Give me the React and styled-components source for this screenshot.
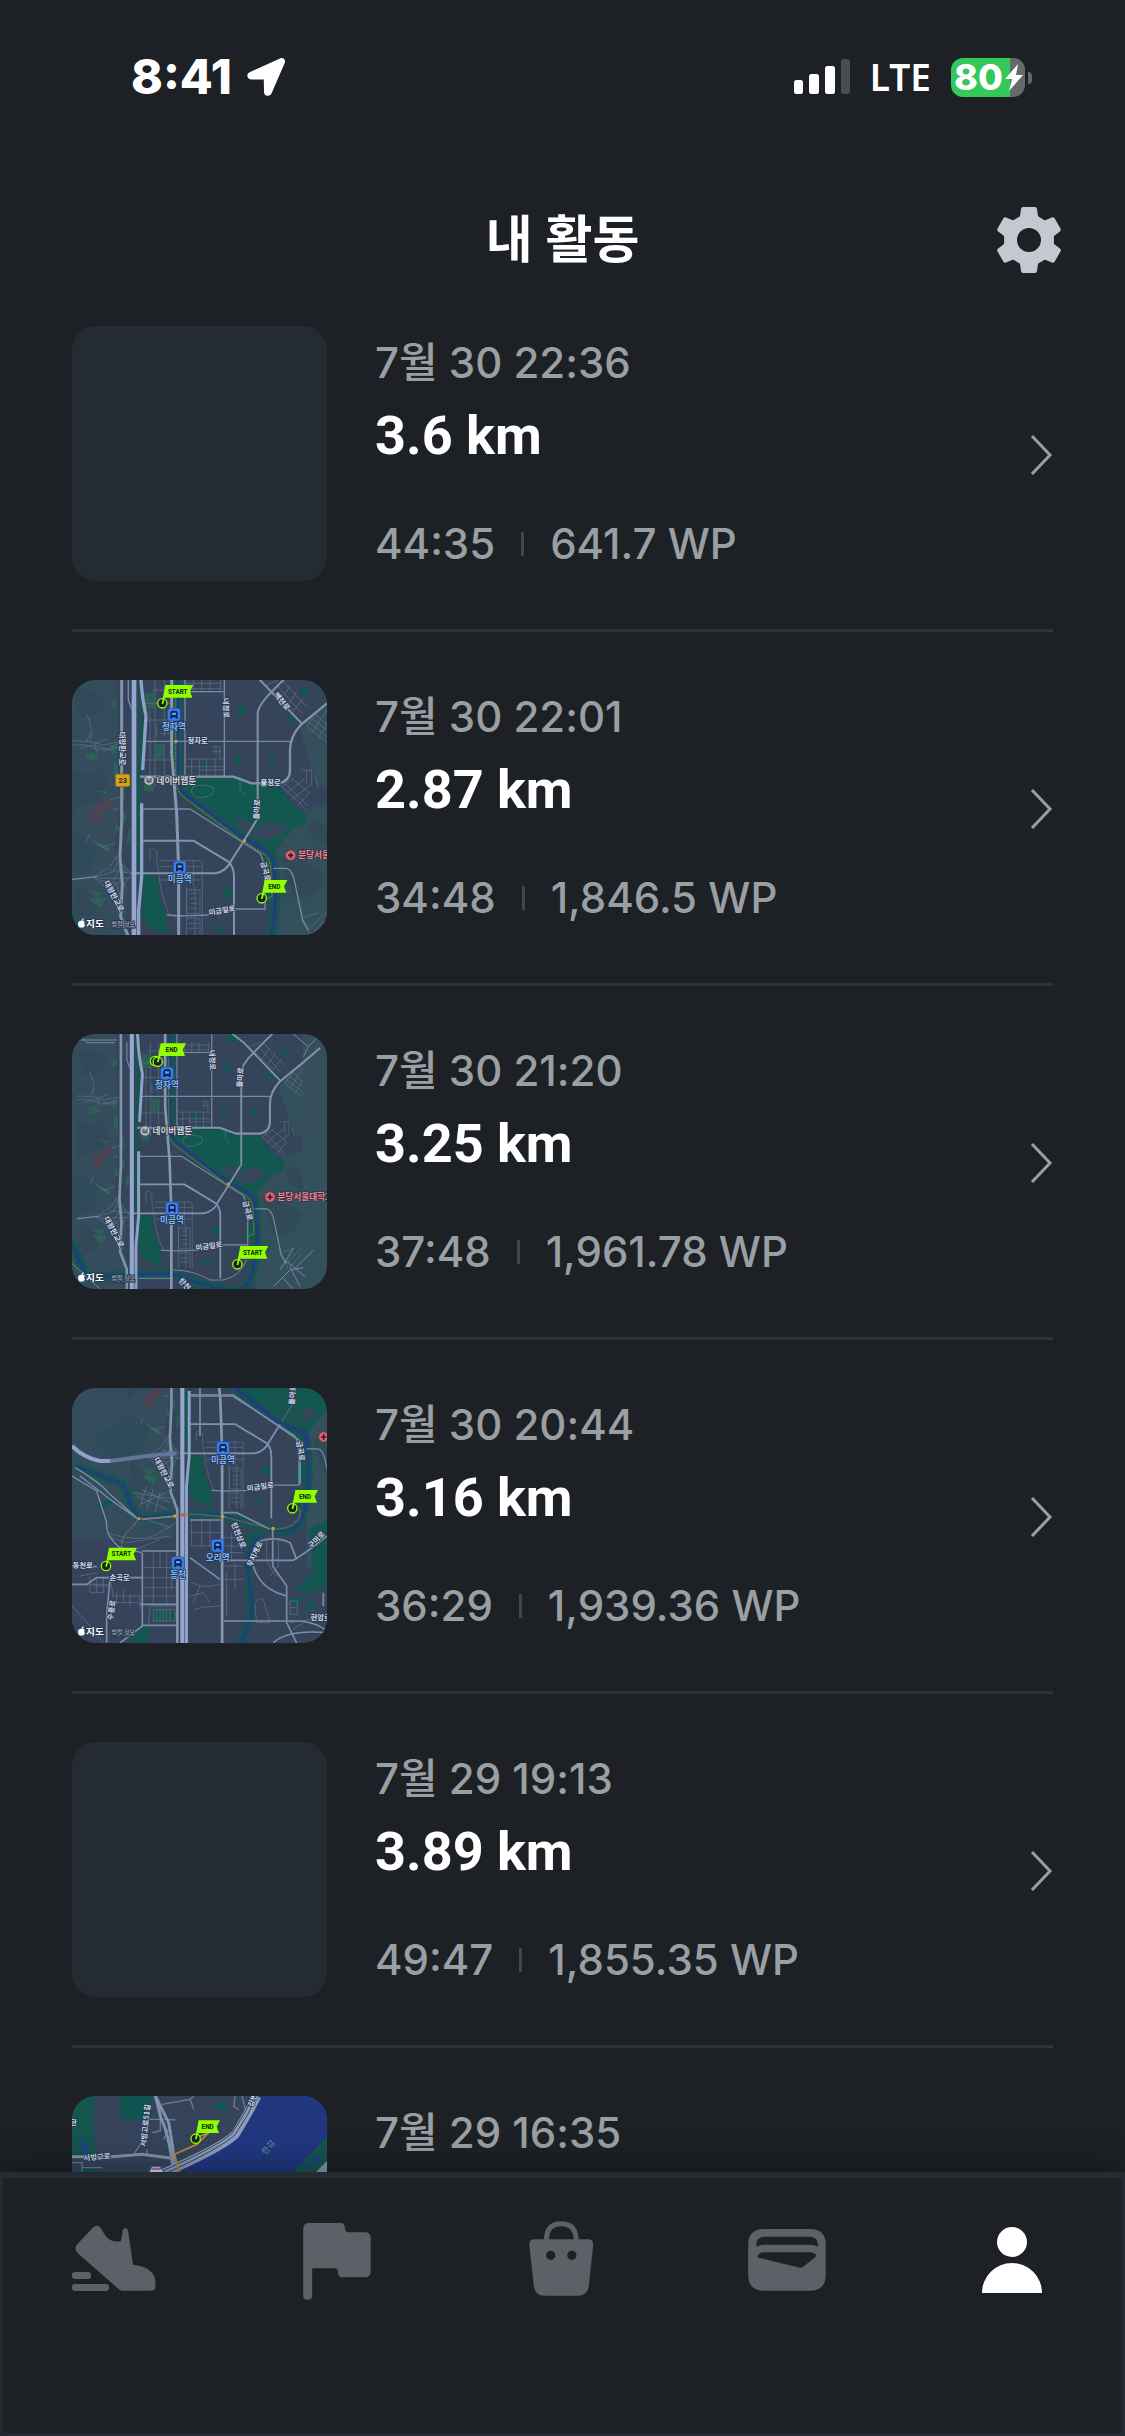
import React from 'react';
import styled, { createGlobalStyle, ThemeProvider } from 'styled-components';

const theme = {
  colors: {
    background: '#1d2125',
    surface: '#252b33',
    divider: '#2b343d',
    separator: '#41474c',
    text: '#ffffff',
    muted: '#9a9fa4',
    icon: '#c4c8d0',
    tab: '#5b6167',
    battery: '#34c759',
  },
  fonts: {
    base: 'Inter, "Noto Sans CJK KR", sans-serif',
    number: 'Roboto, "Noto Sans CJK KR", sans-serif',
    status: '"Noto Sans", sans-serif',
  },
};

const GlobalStyle = createGlobalStyle`
  * {
    box-sizing: border-box;
  }
  body {
    margin: 0;
    background: #1d2125;
  }
`;

const Screen = styled.div`
  display: flex;
  flex-direction: column;
  height: 100vh;
  overflow: hidden;
  background: ${({ theme }) => theme.colors.background};
  color: ${({ theme }) => theme.colors.text};
  font-family: ${({ theme }) => theme.fonts.base};
`;

/* ---------Status bar--------------- */
const StatusBar = styled.div`
  display: flex;
  justify-content: space-between;
  align-items: center;
  flex: none;
  height: 154px;
  padding: 0 92px 0 131px;
`;
StatusBar.Group = styled.div`
  display: flex;
  align-items: center;
  gap: ${({ $gap }) => $gap}px;
`;
StatusBar.Time = styled.span`
  font-size: 48px;
  font-weight: 800;
  line-height: 60px;
`;
StatusBar.Network = styled.span`
  font-family: ${({ theme }) => theme.fonts.status};
  font-size: 37px;
  font-weight: 600;
  line-height: 48px;
`;
const Battery = styled.div`
  position: relative;
  display: flex;
  align-items: center;
  width: 74px;
  height: 39px;
  margin-right: 8px;
  padding-left: 3px;
  border-radius: 12px;
  background: linear-gradient(to right, ${({ theme }) => theme.colors.battery} 80%, #66696c 80%);
  font-size: 36px;
  font-weight: 800;
  line-height: 39px;
  &::after {
    content: '';
    position: absolute;
    left: 77px;
    top: 14px;
    width: 4px;
    height: 12px;
    border-radius: 0 4px 4px 0;
    background: #66696c;
  }
`;
Battery.Bolt = styled.svg`
  position: absolute;
  right: 2px;
  top: 6px;
  width: 18px;
  height: 27px;
`;

/* ---------Header--------------- */
const Header = styled.header`
  display: grid;
  grid-template-columns: 1fr auto 1fr;
  align-items: center;
  flex: none;
  height: 172px;
  padding: 0 62px;
`;
Header.Title = styled.h1`
  grid-column: 2;
  margin: 0;
  font-size: 51px;
  font-weight: 600;
  line-height: 72px;
`;
Header.Action = styled.button`
  justify-self: end;
  display: flex;
  padding: 0;
  border: none;
  background: none;
  color: ${({ theme }) => theme.colors.icon};
`;

/* ---------Activity list--------------- */
const List = styled.ul`
  flex: 1;
  min-height: 0;
  margin: 0;
  padding: 0 72px;
  list-style: none;
  overflow: auto;
  scrollbar-width: none;
`;
const Item = styled.li`
  padding-bottom: 48px;
  & + & {
    padding-top: 48px;
    border-top: 3px solid ${({ theme }) => theme.colors.divider};
  }
`;
const ItemLink = styled.a`
  display: flex;
  align-items: center;
  gap: 48px;
  color: inherit;
  text-decoration: none;
`;
const Thumb = styled.div`
  flex: none;
  width: 255px;
  height: 255px;
  border-radius: 24px;
  background: ${({ theme }) => theme.colors.surface};
  overflow: hidden;
  & svg {
    display: block;
    width: 100%;
    height: 100%;
  }
`;
const Info = styled.div`
  display: flex;
  flex-direction: column;
  flex: 1;
  height: 255px;
  padding: 12px 0;
`;
Info.Date = styled.time`
  color: ${({ theme }) => theme.colors.muted};
  font-size: 42px;
  font-weight: 500;
  line-height: 50px;
`;
Info.Distance = styled.strong`
  margin-top: 15px;
  font-family: ${({ theme }) => theme.fonts.number};
  font-size: 54px;
  font-weight: 700;
  line-height: 66px;
`;
Info.Stats = styled.div`
  display: flex;
  align-items: center;
  gap: 26px;
  margin-top: auto;
  color: ${({ theme }) => theme.colors.muted};
  font-size: 42px;
  font-weight: 500;
  line-height: 50px;
`;
Info.Separator = styled.span`
  width: 3px;
  height: 24px;
  background: ${({ theme }) => theme.colors.separator};
`;
const Chevron = styled.svg`
  flex: none;
  width: 24px;
  height: 42px;
  fill: none;
  stroke: ${({ theme }) => theme.colors.muted};
  stroke-width: 3;
`;

/* ---------Tab bar--------------- */
const TabBar = styled.nav`
  position: relative;
  display: grid;
  grid-template-columns: repeat(5, 1fr);
  align-items: start;
  flex: none;
  height: 264px;
  padding-top: 43px;
  background: ${({ theme }) => theme.colors.background};
  box-shadow:
    inset 0 0 0 3px ${({ theme }) => theme.colors.surface},
    inset 0 6px 0 ${({ theme }) => theme.colors.surface},
    0 -6px 30px rgba(0, 0, 0, 0.3);
`;
TabBar.Link = styled.a`
  display: flex;
  justify-content: center;
  color: ${({ theme, $active }) => ($active ? theme.colors.text : theme.colors.tab)};
  & svg {
    width: 90px;
    height: 90px;
    fill: currentColor;
  }
`;

/* ---------Icons--------------- */
const LocationIcon = () => (
  <svg width="40" height="40" viewBox="0 0 40 40" fill="#fff" aria-hidden="true">
    <path d="M34 1.4C37 0 40 2.600 38.800 5.800L25.500 36.600C24 40 18.200 39.400 18 35.400L17.800 22.400H5C1 22.200 0 17 3.600 15.200Z" />
  </svg>
);

const SignalIcon = () => (
  <svg width="56" height="36" viewBox="0 0 56 36" fill="#fff" aria-hidden="true">
    <rect x="0" y="21" width="9" height="14" rx="2.500" />
    <rect x="15" y="15" width="10" height="20" rx="2.500" />
    <rect x="31" y="7" width="10" height="28" rx="2.500" />
    <rect x="47" y="0" width="9" height="35" rx="2.500" opacity="0.2" />
  </svg>
);

const GearIcon = () => (
  <svg width="68" height="68" viewBox="-34 -34 68 68" fill="currentColor" aria-hidden="true">
    <circle r="18.500" fill="none" stroke="currentColor" strokeWidth="13" />
    {[0, 60, 120, 180, 240, 300].map((angle) => (
      <path
        key={angle}
        transform={`rotate(${angle})`}
        d="M-11-21L-9-24L-8-31Q-7.700-33-6-33H6Q7.700-33 8-31L9-24L11-21Z"
      />
    ))}
  </svg>
);

const ShoeIcon = () => (
  <svg viewBox="0 0 90 90" aria-hidden="true">
    <path d="M25 12.500Q28.500 9.500 32 12Q33.500 13 34.800 16.500Q39.500 26 48 26.400H52.600Q54 23 54.600 15.500Q55.200 13.300 57.300 13.300Q59.700 13.300 60 15.500L65 49.800C78 51 87.400 57 87.400 67V71.500Q87.400 75.700 83.500 75.700H53.500L50.500 74L10 38.500Q5.500 34 9 29.500Z" />
    <rect x="4" y="57" width="19" height="7" rx="3" />
    <rect x="4" y="69" width="37" height="7" rx="3" />
  </svg>
);

const FlagIcon = () => (
  <svg viewBox="0 0 90 90" aria-hidden="true">
    <path d="M16 8H48.500Q51 8 51.500 10.500L52.500 15.500Q53 17.300 55 17.300H72Q77.700 17.300 77.700 23V56.500Q77.700 62.300 72 62.300H48.500Q46 62.300 45.500 60L44.500 55Q44 53.300 42 53.300H19.200V80.500Q19.200 84.800 14.700 84.800Q10.200 84.800 10.200 80.500V14Q10.200 8 16 8Z" />
  </svg>
);

const BagIcon = () => (
  <svg viewBox="0 0 90 90" aria-hidden="true">
    <path d="M28.300 26Q28.300 8.700 43.300 8.700Q58.300 8.700 58.300 26" fill="none" stroke="currentColor" strokeWidth="5" />
    <path
      fillRule="evenodd"
      d="M17 24.300H69.500Q75.600 24.300 75.200 30L70.800 71Q69.500 80.800 60 80.800H26.500Q17 80.800 15.800 71L11.300 30Q11 24.300 17 24.300ZM32.700 35.700a4.600 4.600 0 1 0 .1 0ZM53.800 35.700a4.600 4.600 0 1 0 .1 0Z"
    />
  </svg>
);

const WalletIcon = () => (
  <svg viewBox="0 0 90 90" aria-hidden="true">
    <path
      fillRule="evenodd"
      d="M21 14H67Q82.700 14 82.700 29.500V60Q82.700 75.700 67 75.700H21Q5.200 75.700 5.200 60V29.500Q5.200 14 21 14ZM22 21.700Q13.400 21.700 13.400 30V32Q16 29.700 21 29.700H67Q72 29.700 74.900 32V30Q74.900 21.700 66.500 21.700ZM21 37.300Q16 37.300 14.500 41.500Q14.600 42.500 15.500 42.700L57 52.700Q59 53 60.500 51.500L73.500 41Q72 37.300 67 37.300Z"
    />
  </svg>
);

const PersonIcon = () => (
  <svg viewBox="0 0 90 90" aria-hidden="true">
    <circle cx="44" cy="27" r="15" />
    <path d="M14 78A30 30 0 0 1 74 78Z" />
  </svg>
);

/* ---------Map pieces--------------- */
const LabelText = styled.text`
  font-family: "Noto Sans CJK KR", sans-serif;
  font-size: ${({ $size }) => $size || 22}px;
  font-weight: 700;
  fill: ${({ $color }) => $color || '#d3dced'};
  stroke: #27334a;
  stroke-width: 4px;
  paint-order: stroke;
  text-anchor: ${({ $anchor }) => $anchor || 'middle'};
`;

const Label = ({ x, y, angle = 0, children, ...rest }) => (
  <LabelText transform={`translate(${x} ${y}) rotate(${angle})`} dy="8" {...rest}>
    {children}
  </LabelText>
);

const ShieldText = styled.text`
  font-family: Roboto, sans-serif;
  font-size: 22px;
  font-weight: 700;
  fill: #2c2a22;
  text-anchor: middle;
`;

const MarkerText = styled.text`
  font-family: Roboto, sans-serif;
  font-size: 19px;
  font-weight: 700;
  fill: #10240c;
  text-anchor: middle;
`;

const Marker = ({ x, y, width, children }) => (
  <g transform={`translate(${x} ${y})`}>
    <circle r="14" fill="#182328" stroke="#92ff00" strokeWidth="4" />
    <path
      d={`M-2 2L9-55H${width + 9}L${width - 1}-36L${width + 6}-17H8L3 2Z`}
      fill="#92ff00"
    />
    <MarkerText x={width / 2 + 4} y="-29">{children}</MarkerText>
  </g>
);

const Station = ({ x, y, children }) => (
  <g transform={`translate(${x} ${y})`}>
    <rect x="-19" y="-19" width="38" height="38" rx="8" fill="#3a80ee" stroke="#23489a" strokeWidth="2" />
    <path d="M-11 12V-5Q-11-12-4-12H4Q11-12 11-5V12H6L4 8H-4L-6 12Z" fill="#102548" />
    <path d="M-6-6H6V1H-6Z" fill="#5b9cff" />
    <Label x={0} y={37} $size={26} $color="#77b5ff">{children}</Label>
  </g>
);

const Hospital = ({ x, y, children }) => (
  <g transform={`translate(${x} ${y})`}>
    <circle r="15" fill="#e0656f" stroke="#7c3744" strokeWidth="2" />
    <path d="M-8 0H8M0-8V8" stroke="#3b1a24" strokeWidth="5" />
    <LabelText x="22" y="9" $size={26} $color="#ff7d86" $anchor="start">
      {children}
    </LabelText>
  </g>
);

const Webtoon = ({ x, y }) => (
  <g transform={`translate(${x} ${y})`}>
    <circle r="15" fill="#b9bdc4" stroke="#4b525f" strokeWidth="2" />
    <path d="M-6-7V5H6V-7M0-5V5" stroke="#363d49" strokeWidth="3" fill="none" />
    <Label x={82} y={2} $size={26} $color="#d2d4d8">네이버웹툰</Label>
  </g>
);

const Legal = ({ y }) => (
  <g transform={`translate(0 ${y})`}>
    <path d="M64-8Q67-15 71-15Q71-9 66-7Q71-9 74-5Q70 0 75 6Q71 14 67 13Q64 11 61 13Q55 12 54 2Q54-8 64-8Z" fill="#fff" />
    <LabelText x="105" y="10" $size={29} $color="#fff">지도</LabelText>
    <LabelText x="190" y="9" $size={18} $color="#8995a4" textDecoration="underline">법적 정보</LabelText>
  </g>
);

const RIVER =
  'M352-60V330Q355 360 385 380L545 500L605 535Q642 550 642 590L647 686Q640 790 624 833Q605 868 574 872Q520 868 439 844L360 816H225L79 827Q58 800 45 776Q30 720 12 709L-140 653';

const HATCH = [
  'M665 350L715 395L740 420M675 340L745 410M695 325L750 370M665 350L700 325M680 370L735 325M695 390L750 345M712 408L745 370M725 300H755V345M740 300V340M765 320L775 350',
  'M740 170L801 215M745 155L801 200M755 145L801 180M765 130L801 165M740 170L770 130M755 190L801 120M775 205L801 160',
  'M640 65L700 120M655 50L725 130M670 35L740 110M660 90L690 50M685 105L710 65M700 125L730 85M620 45L655 30',
  'M378 267H493M378 290H493M395 267V318M418 267V318M440 267V318M465 267V318M420 300H493M458 230H480V267M468 230V255M458 245H482',
  'M378 40H482M378 56H482M400 30V65M425 30V65M450 30V65M378 65H482V30',
  'M300 590H427V795M300 610H427M300 630H427M380 650V795M405 650V795M380 660H420V730H380ZM390 670H412M390 685H412M390 700H412M390 715H412M380 745H420V795M385 760H415M385 775H415M400 572V650M375 572V615M300 572H425Q427 575 427 590',
  'M278 60H335M285 30V350M270 120V320M313 30V200M255 100H335M255 150H335M300 190H340M313 220V320M290 170V200M255 270H335',
];

const HILL_ROADS = [
  'M78 130Q100 170 92 210M36 212L90 215L130 225L180 215M60 235L100 225L150 240L180 228M110 250L105 220L145 205M80 215L90 190M36 225H80L120 240L140 235M130 245L175 220',
  'M150 390L182 380M160 415L178 420M80 515L90 490M130 530L165 520M150 545L100 512',
  'M103 620L150 590L180 545M103 622L160 605L178 565M103 625H215M120 630L170 640L185 700M103 622L130 645L175 690M150 600L215 610M165 560L212 608M160 630Q190 600 180 550M150 655L200 620M185 660L212 610',
  'M725 750L750 795M760 790L785 760L801 750M725 745L775 728M745 780L800 725',
];

// Shared Bundang street geometry, scaled and shifted by each thumbnail
const Bundang = ({ transform }) => (
  <g transform={transform} fill="none" strokeLinejoin="round">
    <path d="M-300-100H168L172 200L178 400L165 540L205 650L190 900H-300Z" fill="#344d5c" />
    <path d="M640 540L700 480L735 420L801 400V330L1000 200V1000H640Z" fill="#33505c" />
    <path d="M720 180L801 100V-100H1000V400L770 340Z" fill="#35505c" />
    <g fill="#2e4454" opacity="0.5">
      <path d="M36 300Q90 330 120 290Q160 350 110 400Q60 390 36 440Z" />
      <path d="M40 60Q100 40 140 100Q110 150 60 140Z" />
      <path d="M50 640Q90 660 110 720Q80 760 40 720Z" />
      <path d="M660 560Q740 560 801 620Q760 700 700 680Z" />
      <path d="M740 460Q780 440 801 480V530Q750 520 740 460Z" />
    </g>
    <path d="M-80 560L40 480L110 520L90 600L-20 640Z" fill="#2d4957" opacity="0.6" />
    <path d="M90 430L110 405L158 378V405L130 425L122 450L92 460Z" fill="#5c3f4a" opacity="0.6" />
    <g fill="#2a6a55" opacity="0.75">
      <path d="M158 88L172 95V112H155ZM150 225H172V250H155ZM160 275L175 285V330L162 320Z" />
      <path d="M75 255L100 245L115 265L85 275ZM98 360L140 362L136 372ZM120 520L150 535L140 545L108 525Z" />
      <path d="M182 360L195 350V395L184 390ZM186 410L200 440L190 470ZM165 455L185 480L165 485ZM205 470L215 500L200 530Z" />
      <path d="M90 660L130 668L110 685ZM85 685H140L120 715ZM170 580L210 600L190 615Z" />
      <path d="M255 68H283V118H255ZM288 222H310V266H288ZM252 345H282V364H252Z" />
    </g>
    <g fill="#13584f">
      <path d="M230-60H243V120L252 170L242 300V400L248 600H232V300L240 200Z" />
      <path d="M375 322H520L590 345L660 350L700 410L740 430L735 470L700 475L640 545L660 640L640 700H600L625 600L600 550L545 510L380 395L350 360Z" />
      <path d="M250 615L290 618L298 690L320 735L322 795L270 770L245 740Z" />
      <path d="M720 55L740 50L748 70L730 80ZM534 106H554V135H534ZM528 256H540V284H528ZM630 252H642V280H630ZM432 270H447V292H432ZM492 655H520V683H492ZM675 130L715 150L690 160ZM462 770H492V782H462ZM662 480L680 472L682 495Z" />
      <path d="M345 400L358 500V560L348 480ZM540 30L555 0H600L560 34Z" />
    </g>
    <path d="M525 455Q560 440 590 470Q640 440 680 475Q640 520 590 505Q550 490 525 455Z" fill="#35475a" />
    <path d={RIVER} stroke="#155650" strokeWidth="30" />
    <path d={RIVER} stroke="#243b82" strokeWidth="9" />
    <g stroke="#64738c" strokeWidth="2">
      {HATCH.map((d) => <path key={d} d={d} />)}
      {HILL_ROADS.map((d) => <path key={d} d={d} />)}
      <path d="M400 350Q430 340 460 352V370Q440 385 410 382Q385 370 400 350ZM540 330V360L555 375M270 570V540Q280 530 290 545V570L300 640Q310 700 330 735" />
    </g>
    <g stroke="#7989a4" strokeWidth="4">
      <path d="M375-60V320M493-60V320M255 214H690M250 417H390L600 550Q615 572 615 640V718" />
      <path d="M320 735Q370 740 440 735L520 717H617M640 595H680Q698 600 705 640L728 750L745 780M330 65H490" />
      <path d="M36 628L110 620M205 30V90L215 118" />
    </g>
    <g stroke="#8292ad" strokeWidth="6">
      <path d="M593 450V130Q595 105 635 65L700 0M600 30L725 160M480-60L600 30" />
      <path d="M240 320H520L575 340H655Q690 335 690 300V240Q690 200 722 165L801 100L860 50" strokeWidth="7" />
      <path d="M250 512H400L505 575Q522 590 522 620V830M215 610H465Q500 605 515 570L550 515L590 450" />
    </g>
    <path d="M185-60V450L180 560L187 640L182 740L205 800V1250" stroke="#8291ac" strokeWidth="9" />
    <path d="M335-60V250L350 430L356 600V1250" stroke="#8797b1" strokeWidth="9" />
    <path d="M240-60Q240 60 258 137M258 137L248 300M245 400V620L236 720V1250" stroke="#8fa1c6" strokeWidth="10" />
    <path d="M222-60V1250" stroke="#94a6ce" strokeWidth="14" />
  </g>
);

const ROUTE = 'M347 85V340Q352 365 372 382L535 505L600 545Q628 560 632 590L636 680L612 690';

const Route = ({ d, ...rest }) => (
  <g fill="none" {...rest}>
    <path d={d} stroke="#6f7142" strokeWidth="5" strokeDasharray="4 3" opacity="0.8" />
    <path d={d} stroke="#ad8a35" strokeWidth="3" strokeDasharray="3 6" opacity="0.8" />
  </g>
);

const NorthMap = () => (
  <svg viewBox="36 30 765 765" role="img" aria-label="정자역 - 미금역">
    <rect x="36" y="30" width="765" height="765" fill="#35445b" />
    <Bundang />
    <Route d={ROUTE} />
    <circle cx="348" cy="214" r="5" fill="#e39a2e" />
    <circle cx="553" cy="512" r="5" fill="#e39a2e" />
    <Label x={188} y={236} angle={90}>대왕판교로</Label>
    <Label x={498} y={114} angle={88}>내정로</Label>
    <Label x={666} y={94} angle={50}>백현로</Label>
    <Label x={413} y={212}>정자로</Label>
    <Label x={632} y={337}>불정로</Label>
    <Label x={590} y={418} angle={-86}>돌마로</Label>
    <Label x={617} y={604} angle={75}>금곡로</Label>
    <Label x={162} y={678} angle={62}>대왕판교로</Label>
    <Label x={486} y={721} angle={-10}>미금일로</Label>
    <rect x="166" y="312" width="44" height="38" rx="6" fill="#d5a317" stroke="#6e5a24" strokeWidth="2" />
    <ShieldText x="188" y="339">23</ShieldText>
    <Webtoon x={267} y={331} />
    <Station x={342} y={134}>정자역</Station>
    <Station x={359} y={592}>미금역</Station>
    <Hospital x={692} y={556}>분당서울</Hospital>
    <Marker x={307} y={100} width={84}>START</Marker>
    <Marker x={605} y={685} width={68}>END</Marker>
    <Legal y={760} />
  </svg>
);

const MiddleMap = () => (
  <svg viewBox="36 42 765 765" role="img" aria-label="미금역 - 정자역">
    <rect x="36" y="42" width="765" height="765" fill="#35445b" />
    <Bundang transform="translate(19 40) scale(0.885)" />
    <g fill="none" stroke="#75859f" strokeWidth="3">
      <path d="M340 750Q400 750 450 780H490Q540 770 560 720M36 730L90 780L120 807M235 775H330" />
      <path d="M640 800L690 750L730 743M660 750L700 685M675 720L735 770M690 740L720 800M665 770L700 807M705 745L760 690" />
      <path d="M36 60H170M60 42L80 68H165M700 42L745 80L770 55M745 80L730 110" />
    </g>
    <Route d={ROUTE} transform="translate(19 40) scale(0.885)" />
    <circle cx="505" cy="492" r="5" fill="#c2893a" />
    <Label x={457} y={120} angle={88}>내정로</Label>
    <Label x={540} y={172} angle={-86}>돌마로</Label>
    <Label x={563} y={572} angle={75}>금곡로</Label>
    <Label x={162} y={636} angle={62}>대왕판교로</Label>
    <Label x={447} y={678} angle={-8}>미금일로</Label>
    <Label x={388} y={808} angle={48}>탄천상로</Label>
    <Webtoon x={255} y={333} />
    <Station x={321} y={160}>정자역</Station>
    <Station x={336} y={565}>미금역</Station>
    <Hospital x={630} y={531}>분당서울대학교</Hospital>
    <circle cx="285" cy="123" r="14" fill="#182328" stroke="#92ff00" strokeWidth="4" />
    <Marker x={293} y={125} width={76}>END</Marker>
    <Marker x={532} y={733} width={84}>START</Marker>
    <Legal y={772} />
  </svg>
);

const SouthMap = () => (
  <svg viewBox="36 36 765 765" role="img" aria-label="동천역 - 미금역">
    <rect x="36" y="36" width="765" height="765" fill="#35445b" />
    <Bundang transform="translate(169.500 -311) scale(0.890)" />
    <g fill="#14564f">
      <path d="M745 460L801 430V640L740 650L700 640L760 590Z" />
      <path d="M530 36H700L720 90L745 140V190L700 170L620 110Z" opacity="0.7" />
      <path d="M690 660L740 670L700 690ZM745 655L770 700L740 700ZM200 780L240 750H270L265 801H215ZM280 700H340V735H280ZM115 385L150 365L160 380L125 400Z" />
      <path d="M560 470L620 465L590 520L575 600L590 720L560 801H530L560 720L555 560Z" />
    </g>
    <path d="M600 475Q560 520 562 580L578 690L572 740L540 801" fill="none" stroke="#243b82" strokeWidth="8" />
    <path d="M530 36Q590 90 660 140L735 170Q745 180 745 200" fill="none" stroke="#243b82" strokeWidth="9" />
    <g fill="none" stroke="#66758e" strokeWidth="2">
      <path d="M245 340L330 380M230 360L320 400M260 330L240 390M280 340L260 400M300 350L285 410M240 385L320 350M220 350L350 370" />
      <path d="M280 530V685M320 530V685M248 575H350M248 605H350M248 635H350M300 530V575M335 600V640M248 660H350" />
      <path d="M270 690H350M280 700H345V735H280ZM290 700V735M300 700V735M310 700V735M320 700V735M330 700V735M265 750L270 690" />
      <path d="M90 600V650H130V600M100 630H150M110 610V650M80 625H150M155 660H240V700M170 650V685M190 640V680M210 655V690M155 680H235M150 610L160 660" />
      <path d="M395 435V510H480M425 435V510M450 435V510M390 470H480M395 620Q430 640 480 625M390 660L430 650L450 680M400 700Q440 690 480 690M420 630L400 680" />
      <path d="M490 485H550M490 510H545M515 470V550M500 530H550M490 570H550M490 610H550M500 590V720M525 560V640M585 690Q590 660 610 670L630 740H590Z" />
      <path d="M620 490V550Q640 600 655 600M655 490V570L630 600M690 675H712V715H690ZM690 695H712M690 740L760 730M700 760L730 740M60 600L110 590" />
      <path d="M150 485L200 500L330 480M140 470Q230 500 280 480L350 440M230 520L300 490M36 690L90 750L130 801M260 430L330 455" />
    </g>
    <g fill="none" stroke="#7c8ca7" strokeWidth="5">
      <path d="M45 275Q120 320 145 350L230 425M36 300L110 345L140 440Q135 480 180 515L245 530M60 300L150 370L235 430" strokeWidth="4" />
      <path d="M245 525H350M247 530V750M150 605H245M36 570L110 572M36 625H80L110 605H150M150 610L140 720V801M240 685H350M180 801L250 748H350" />
      <path d="M245 430L345 420M390 432H480M390 545L480 610M510 553H700Q740 530 801 480M490 735H720Q770 740 801 765M490 410H530L630 460" />
      <path d="M638 455V570L680 630V740L710 801M580 570Q600 640 680 660M600 495Q650 480 690 500L710 550M640 801Q680 760 801 770M790 690V650" />
      <path d="M420 36V180M390 57H520L720 195V325" />
    </g>
    <path d="M36 210Q70 245 120 255H150" fill="none" stroke="#90a2ca" strokeWidth="12" />
    <path d="M150 255L260 240L350 232" fill="none" stroke="#66759a" strokeWidth="12" />
    <Route d="M185 512Q185 480 210 460L237 428L340 424L370 415H420L490 422L560 440L638 460Q700 460 720 420V400" />
    <g fill="#e0982f">
      <circle cx="237" cy="428" r="4" />
      <circle cx="345" cy="420" r="5" />
      <circle cx="488" cy="421" r="5" />
      <circle cx="639" cy="457" r="5" />
      <circle cx="368" cy="416" r="6" fill="#f0503a" />
    </g>
    <Label x={697} y={56} angle={-86}>돌마로</Label>
    <Label x={722} y={225} angle={80}>금곡로</Label>
    <Label x={312} y={290} angle={62}>대왕판교로</Label>
    <Label x={601} y={332} angle={-8}>미금일로</Label>
    <Label x={536} y={478} angle={68}>탄천상로</Label>
    <Label x={584} y={534} angle={-65}>무지개로</Label>
    <Label x={769} y={491} angle={-45}>구미로</Label>
    <Label x={68} y={568} angle={2}>동천로</Label>
    <Label x={179} y={604}>손곡로</Label>
    <Label x={154} y={702} angle={-80}>수풍로</Label>
    <Label x={782} y={723}>현암로</Label>
    <Station x={489} y={216}>미금역</Station>
    <Station x={473} y={509}>오리역</Station>
    <Station x={354} y={561}>동천</Station>
    <Hospital x={791} y={183} />
    <Marker x={138} y={570} width={84}>START</Marker>
    <Marker x={697} y={397} width={68}>END</Marker>
    <Legal y={766} />
  </svg>
);

const RiverMap = () => (
  <svg viewBox="0 0 765 765" role="img" aria-label="한강">
    <rect width="765" height="765" fill="#35445b" />
    <path d="M20 0H68L62 90L72 180L40 190L0 180V60Z" fill="#15564f" />
    <path d="M145 0H240V70H155L145 50Z" fill="#0f544e" />
    <path d="M430 22H464V42H430ZM22 218H68V235H22Z" fill="#0c584c" />
    <path d="M555 0H765V765H150L325 228L440 150L500 90Z" fill="#203780" />
    <path d="M765 120L665 228L500 400H765Z" fill="#15564f" />
    <path d="M765 195L730 230L600 400H765Z" fill="#8495b2" />
    <path d="M695 215L720 195L725 205L700 220ZM722 190L735 177L745 190L732 200ZM25 125L50 160L55 175L30 165Z" fill="#203f8e" />
    <g fill="none" stroke="#6c7b94" strokeWidth="4">
      <path d="M270 25L355 10L365 40M355 10L365 0M228 70H265V105L240 110M275 70L310 72M185 175L215 130M0 200H30V235M30 215H90M490 0L485 30L500 42M510 0L520 40M275 130L290 100" />
      <path d="M225 180V160" />
    </g>
    <path d="M250 0L290 80Q305 160 310 230M250 0L268 70Q290 110 305 230M0 182H120L210 175L310 188" fill="none" stroke="#8191ab" strokeWidth="9" />
    <path d="M555 0Q525 60 490 115Q450 155 265 235" fill="none" stroke="#8b9cbb" strokeWidth="26" />
    <path d="M545 0Q515 60 480 112Q440 150 255 232M555 0Q528 60 490 115Q450 155 275 235" fill="none" stroke="#34455a" strokeWidth="3" />
    <path d="M372 125L410 110L375 145L308 175L322 230" fill="none" stroke="#b98a3a" strokeWidth="5" />
    <path d="M230 230L240 212H265L278 230Z" fill="#d8dde6" stroke="#2f6fdb" strokeWidth="4" />
    <path d="M240 219H267" stroke="#d0413c" strokeWidth="4" />
    <Label x={220} y={88} angle={-84}>서빙고로51길</Label>
    <Label x={75} y={183} angle={-6}>서빙고로</Label>
    <Label x={542} y={12} angle={-70}>강변</Label>
    <Label x={4} y={80}>한</Label>
    <Label x={590} y={155} angle={-52} $size={26} $color="#3d7ac4">한강</Label>
    <Marker x={371} y={128} width={64}>END</Marker>
  </svg>
);

const activities = [
  { date: '7월 30 22:36', distance: '3.6 km', duration: '44:35', points: '641.7 WP' },
  { date: '7월 30 22:01', distance: '2.87 km', duration: '34:48', points: '1,846.5 WP', map: NorthMap },
  { date: '7월 30 21:20', distance: '3.25 km', duration: '37:48', points: '1,961.78 WP', map: MiddleMap },
  { date: '7월 30 20:44', distance: '3.16 km', duration: '36:29', points: '1,939.36 WP', map: SouthMap },
  { date: '7월 29 19:13', distance: '3.89 km', duration: '49:47', points: '1,855.35 WP' },
  { date: '7월 29 16:35', map: RiverMap },
];

const tabs = [
  { label: '걷기', icon: ShoeIcon },
  { label: '챌린지', icon: FlagIcon },
  { label: '상점', icon: BagIcon },
  { label: '지갑', icon: WalletIcon },
  { label: '내 활동', icon: PersonIcon, active: true },
];

function Activity({ date, distance, duration, points, map: Map }) {
  return (
    <Item>
      <ItemLink href="#activity">
        <Thumb>{Map && <Map />}</Thumb>
        <Info>
          <Info.Date>{date}</Info.Date>
          {distance && <Info.Distance>{distance}</Info.Distance>}
          {points && (
            <Info.Stats>
              <span>{duration}</span>
              <Info.Separator />
              <span>{points}</span>
            </Info.Stats>
          )}
        </Info>
        <Chevron viewBox="0 0 24 42" aria-hidden="true">
          <path d="M3 3L21 22L3 41" />
        </Chevron>
      </ItemLink>
    </Item>
  );
}

export default function App() {
  return (
    <ThemeProvider theme={theme}>
      <GlobalStyle />
      <Screen>
        <StatusBar>
          <StatusBar.Group $gap={14}>
            <StatusBar.Time>8:41</StatusBar.Time>
            <LocationIcon />
          </StatusBar.Group>
          <StatusBar.Group $gap={20}>
            <SignalIcon />
            <StatusBar.Network>LTE</StatusBar.Network>
            <Battery>
              80
              <Battery.Bolt viewBox="0 0 18 27" aria-hidden="true">
                <path d="M13 0L0 15H7L4 27L18 11H11Z" fill="#fff" />
              </Battery.Bolt>
            </Battery>
          </StatusBar.Group>
        </StatusBar>
        <Header>
          <Header.Title>내 활동</Header.Title>
          <Header.Action type="button" aria-label="설정">
            <GearIcon />
          </Header.Action>
        </Header>
        <List>
          {activities.map((activity) => (
            <Activity key={activity.date} {...activity} />
          ))}
        </List>
        <TabBar>
          {tabs.map(({ label, icon: Icon, active }) => (
            <TabBar.Link key={label} href="#tab" aria-label={label} $active={active}>
              <Icon />
            </TabBar.Link>
          ))}
        </TabBar>
      </Screen>
    </ThemeProvider>
  );
}
